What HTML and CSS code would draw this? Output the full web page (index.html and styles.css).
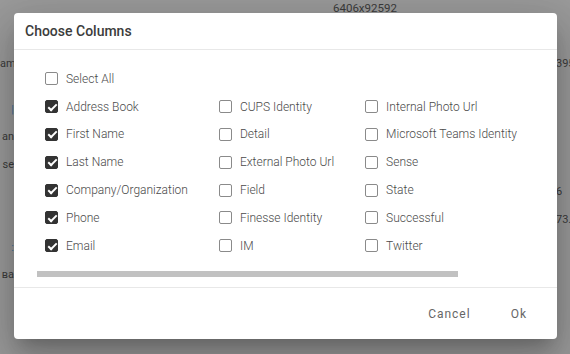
FILE: index.html
```html
<!DOCTYPE html>
<html lang="en">
<head>
  <meta charset="UTF-8" />
  <meta name="viewport" content="width=device-width, initial-scale=1.0"/>
  <title>Choose Columns</title>
  <link rel="stylesheet" href="styles.css">
</head>
<body>
  <div class="page">
    <div class="bg-top">6406x92592</div>
    <div class="bg-rows">
      <div class="bg-row"><span>am</span><span>395</span></div>
      <div class="bg-row spaced"><span class="link">|</span><span></span></div>
      <div class="bg-row"><span>an</span><span></span></div>
      <div class="bg-row"><span>se</span><span></span></div>
      <div class="bg-row"><span></span><span>6</span></div>
      <div class="bg-row"><span></span><span>73.</span></div>
      <div class="bg-row"><span class="link">:</span><span></span></div>
      <div class="bg-row"><span>ва</span><span></span></div>
    </div>
  </div>

  <div class="dialog">
    <div class="dialog-header">Choose Columns</div>

    <div class="dialog-body">
      <label class="item"><span class="box"></span>Select All</label>
      <div class="columns">
        <label class="item"><span class="box checked"></span>Address Book</label>
        <label class="item"><span class="box checked"></span>First Name</label>
        <label class="item"><span class="box checked"></span>Last Name</label>
        <label class="item"><span class="box checked"></span>Company/Organization</label>
        <label class="item"><span class="box checked"></span>Phone</label>
        <label class="item"><span class="box checked"></span>Email</label>
        <label class="item"><span class="box"></span>CUPS Identity</label>
        <label class="item"><span class="box"></span>Detail</label>
        <label class="item"><span class="box"></span>External Photo Url</label>
        <label class="item"><span class="box"></span>Field</label>
        <label class="item"><span class="box"></span>Finesse Identity</label>
        <label class="item"><span class="box"></span>IM</label>
        <label class="item"><span class="box"></span>Internal Photo Url</label>
        <label class="item"><span class="box"></span>Microsoft Teams Identity</label>
        <label class="item"><span class="box"></span>Sense</label>
        <label class="item"><span class="box"></span>State</label>
        <label class="item"><span class="box"></span>Successful</label>
        <label class="item"><span class="box"></span>Twitter</label>
      </div>
      <div class="scrollbar"><div class="thumb"></div></div>
    </div>

    <div class="dialog-footer">
      <button class="btn">Cancel</button>
      <button class="btn">Ok</button>
    </div>
  </div>
</body>
</html>
```

FILE: styles.css
```css
body {
  font-family: Roboto, 'Liberation Sans', sans-serif;
  background-color: #9a9a9a;
  margin: 0;
  padding: 0;
  overflow: hidden;
}
.page {
  height: 354px;
  color: #3a3a3a;
  font-size: 11.5px;
}
.bg-top {
  padding: 1px 0 0 333px;
  height: 17px;
}
.bg-rows {
  padding-top: 37px;
}
.bg-row {
  display: grid;
  grid-template-columns: 14px 1fr 14px;
  height: 27.6px;
  line-height: 18px;
  font-size: 11px;
}
.bg-row.spaced {
  margin-top: 18px;
}
.bg-row span {
  white-space: nowrap;
}
.bg-row span:first-child {
  text-align: right;
}
.bg-row span:last-child {
  grid-column: 3;
}
.link {
  color: #3b6f9a;
}
.dialog {
  position: absolute;
  left: 14px;
  top: 13px;
  width: 543px;
  height: 326px;
  background-color: white;
  border-radius: 4px;
  box-shadow: 0 11px 15px -7px rgba(0, 0, 0, 0.2), 0 24px 38px 3px rgba(0, 0, 0, 0.14), 0 9px 46px 8px rgba(0, 0, 0, 0.12);
  display: flex;
  flex-direction: column;
}
.dialog-header {
  height: 37px;
  line-height: 36px;
  padding-left: 11px;
  font-size: 14px;
  font-weight: 500;
  color: #3c3c3c;
  border-bottom: 1px solid #e8e8e8;
  box-sizing: border-box;
}
.dialog-body {
  padding: 15px 24px 0 23px;
  height: 238px;
  box-sizing: border-box;
  border-bottom: 1px solid #e8e8e8;
}
.columns {
  display: grid;
  grid-auto-flow: column;
  grid-template-rows: repeat(6, 27.8px);
  grid-template-columns: max-content max-content max-content;
  column-gap: 31px;
  padding-left: 8px;
}
.item {
  display: flex;
  align-items: center;
  gap: 8px;
  height: 27.8px;
  font-size: 12px;
  font-weight: 300;
  color: #4a4a4a;
  white-space: nowrap;
}
.dialog-body > .item {
  padding-left: 8px;
}
.box {
  width: 13px;
  height: 13px;
  box-sizing: border-box;
  border: 1px solid #8a8a8a;
  border-radius: 2px;
  position: relative;
  flex: none;
}
.box.checked {
  background-color: #333;
  border-color: #333;
}
.box.checked::after {
  content: '';
  position: absolute;
  left: 3.5px;
  top: 0.5px;
  width: 3px;
  height: 7px;
  border: solid white;
  border-width: 0 2px 2px 0;
  transform: rotate(45deg);
}
.scrollbar {
  margin-top: 11px;
  height: 6px;
}
.thumb {
  width: 421px;
  height: 6px;
  background-color: #c1c1c1;
}
.dialog-footer {
  flex: 1;
  display: flex;
  justify-content: flex-end;
  align-items: center;
  padding-right: 14px;
  gap: 8px;
}
.btn {
  background: none;
  border: none;
  font-family: Roboto, 'Liberation Sans', sans-serif;
  font-size: 12px;
  letter-spacing: 1px;
  color: #666;
  padding: 8px 16px;
  min-width: 0;
}
```
